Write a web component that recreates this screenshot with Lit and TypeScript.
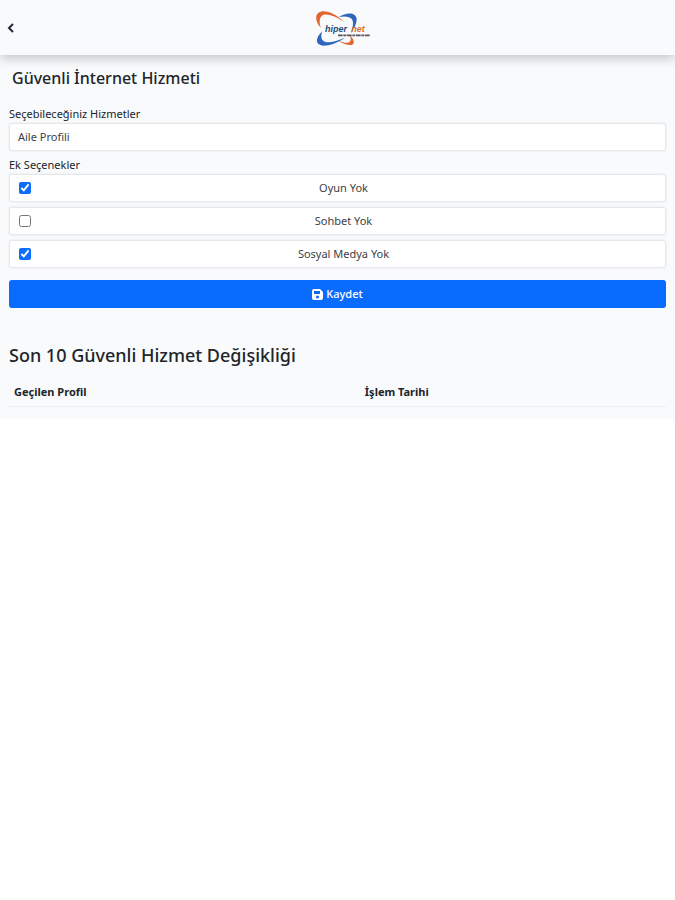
import { LitElement, html, css, svg } from "lit";
import { customElement, state } from "lit/decorators.js";

interface Option {
  id: string;
  label: string;
  checked: boolean;
}

const logo = svg`
  <svg class="logo" viewBox="5 28 216 108" role="img" aria-label="hiper net">
    <path d="M62 82C42 62 42 34 66 32c22-1 46 12 64 31C108 48 86 39 70 42c-14 4-14 24-8 40z" fill="#e2662f"/>
    <path d="M116 49C138 34 168 34 169 56c0 14-8 28-17 42 5-16 9-32 3-42-7-9-22-10-39-7z" fill="#2f66bd"/>
    <path d="M66 92C44 112 44 133 68 135c22 0 46-10 66-24-22 9-44 16-58 13-14-3-16-17-10-32z" fill="#2f66bd"/>
    <path d="M149 104c12 12 16 26 5 29-12 1-27-4-41-13 14 5 26 8 33 5 7-4 6-12 3-21z" fill="#e2662f"/>
    <path d="M113 104h96" stroke="#5b5557" stroke-width="5" stroke-dasharray="14 2 9 2"/>
    <text class="brand" x="74" y="93" fill="#294a78">hiper</text>
    <text class="brand" x="153" y="93" fill="#d9702f">net</text>
  </svg>`;

@customElement("app-root")
export class AppRoot extends LitElement {
  @state() private options: Option[] = [
    { id: "game", label: "Oyun Yok", checked: true },
    { id: "chat", label: "Sohbet Yok", checked: false },
    { id: "social", label: "Sosyal Medya Yok", checked: true },
  ];

  static styles = css`
    :host {
      display: block;
      background: #f8fafc;
      color: #212529;
      font: 11px/16px "Noto Sans", "Open Sans", sans-serif;
    }
    * {
      box-sizing: border-box;
    }
    .bar {
      display: grid;
      grid-template-columns: 1fr auto 1fr;
      align-items: center;
      height: 55px;
      padding: 0 6px;
      box-shadow: 0 4px 10px rgba(0, 0, 0, 0.2);
    }
    .back {
      justify-self: start;
      display: flex;
      border: 0;
      padding: 0;
      background: none;
      color: #212b38;
    }
    .back svg {
      width: 10px;
      height: 12px;
    }
    .logo {
      display: block;
      width: 72px;
      height: 36px;
    }
    .brand {
      font: italic 700 27px "Liberation Sans", sans-serif;
    }
    main {
      padding: 11px 9px 12px;
    }
    h1,
    h2 {
      margin: 0;
      font-weight: 500;
    }
    h1 {
      padding: 0 3px;
      font-size: 16px;
      line-height: 24px;
    }
    h2 {
      margin-top: 34px;
      font-size: 18px;
      line-height: 26px;
    }
    form {
      margin-top: 16px;
    }
    .label {
      display: block;
      margin-bottom: 1px;
      padding: 0;
    }
    fieldset {
      margin: 6px 0 0;
      border: 0;
      padding: 0;
      min-width: 0;
    }
    .box {
      display: flex;
      align-items: center;
      width: 100%;
      height: 28px;
      border: 1px solid #e6e8eb;
      border-radius: 3px;
      background: #fff;
      color: #3c4146;
      box-shadow: 0 0 1px 1px #f0f2f4;
    }
    select.box {
      appearance: none;
      padding: 0 8px;
      font: inherit;
    }
    .options {
      display: grid;
      gap: 5px;
    }
    .option input {
      flex: none;
      width: 12px;
      height: 12px;
      margin: 0 0 0 9px;
      accent-color: #0d6efd;
    }
    .option span {
      flex: 1;
      padding-right: 9px;
      text-align: center;
    }
    .save {
      display: flex;
      align-items: center;
      justify-content: center;
      gap: 3px;
      width: 100%;
      height: 28px;
      margin-top: 12px;
      border: 0;
      border-radius: 3px;
      background: #0a6cff;
      color: #fff;
      font: inherit;
      font-weight: 500;
    }
    .save svg {
      width: 11px;
      height: 11px;
    }
    table {
      width: 100%;
      margin-top: 12px;
      border-collapse: collapse;
      table-layout: fixed;
    }
    th {
      padding: 4px 5px 6px;
      border-bottom: 1px solid #eceef0;
      font-weight: 700;
      text-align: left;
    }
    .profile {
      width: 53.4%;
    }
  `;

  private toggle(id: string) {
    this.options = this.options.map((o) =>
      o.id === id ? { ...o, checked: !o.checked } : o,
    );
  }

  render() {
    return html`
      <header class="bar">
        <button class="back" type="button" aria-label="Geri">
          <svg viewBox="0 0 10 12" fill="none" stroke="currentColor" stroke-width="2">
            <path d="M7 2 3 6l4 4" />
          </svg>
        </button>
        ${logo}
      </header>
      <main>
        <h1>Güvenli İnternet Hizmeti</h1>
        <form @submit=${(e: Event) => e.preventDefault()}>
          <label class="label" for="profile">Seçebileceğiniz Hizmetler</label>
          <select class="box" id="profile">
            <option>Aile Profili</option>
          </select>
          <fieldset>
            <legend class="label">Ek Seçenekler</legend>
            <div class="options">
              ${this.options.map(
                (o) => html`
                  <label class="box option">
                    <input
                      type="checkbox"
                      .checked=${o.checked}
                      @change=${() => this.toggle(o.id)}
                    />
                    <span>${o.label}</span>
                  </label>
                `,
              )}
            </div>
          </fieldset>
          <button class="save" type="submit">
            <svg viewBox="0 0 11 11" aria-hidden="true">
              <path
                fill="currentColor"
                fill-rule="evenodd"
                d="M2 0h6l3 3v6a2 2 0 0 1-2 2H2a2 2 0 0 1-2-2V2a2 2 0 0 1 2-2zm0 2v3h6V2zm3.500 4.500a1.500 1.500 0 1 0 0 3 1.500 1.500 0 0 0 0-3z"
              />
            </svg>
            Kaydet
          </button>
        </form>
        <h2>Son 10 Güvenli Hizmet Değişikliği</h2>
        <table>
          <thead>
            <tr>
              <th class="profile" scope="col">Geçilen Profil</th>
              <th scope="col">İşlem Tarihi</th>
            </tr>
          </thead>
        </table>
      </main>
    `;
  }
}
